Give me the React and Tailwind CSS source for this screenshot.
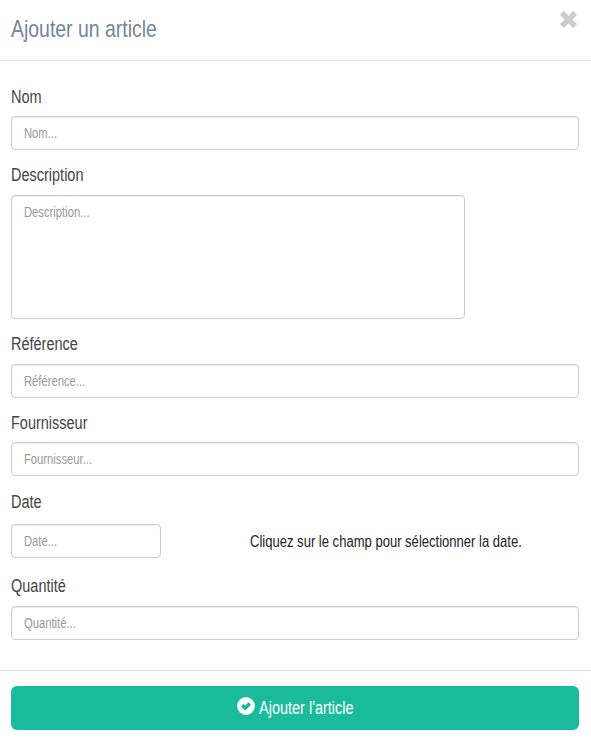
const font = "font-['Liberation_Sans_Narrow','Arial_Narrow','Liberation_Sans',sans-serif]";

const box =
  'block overflow-hidden border border-[#ccc] rounded bg-white px-3 py-1.5 shadow-[inset_0_1px_1px_rgba(0,0,0,0.075)]';

// Condensed text: the control is laid out wider, then squeezed to its box.
const control =
  'block w-[124%] origin-left scale-x-[0.803] bg-transparent p-0 text-sm leading-5 text-[#555] placeholder:text-[#999] placeholder:opacity-100 outline-none resize-none';

function Label({ children, className = '' }) {
  return (
    <label className={`block h-5 text-lg leading-5 text-[#444] ${className}`}>
      <span className="inline-block origin-left scale-x-[0.805]">{children}</span>
    </label>
  );
}

function Field({ placeholder, className = '' }) {
  return (
    <div className={`${box} h-[34px] ${className}`}>
      <input className={`${control} h-5`} placeholder={placeholder} />
    </div>
  );
}

function RemoveIcon() {
  return (
    <svg width="17" height="17" viewBox="0.2 0.2 17.6 17.6" fill="#cccccc">
      <path d="M4.5.5 9 5 13.5.5q.4-.4.8 0l3.2 3.2q.4.4 0 .8L13 9l4.5 4.5q.4.4 0 .8l-3.2 3.2q-.4.4-.8 0L9 13l-4.5 4.5q-.4.4-.8 0L.5 14.3q-.4-.4 0-.8L5 9 .5 4.5q-.4-.4 0-.8L3.7.5q.4-.4.8 0Z" />
    </svg>
  );
}

function OkSignIcon() {
  return (
    <svg className="mb-1 shrink-0" width="18" height="18" viewBox="0 0 18 18">
      <circle cx="9" cy="9" r="8.9" fill="#fff" />
      <path
        d="M4.3 9.1 6.2 7.2q.3-.3.6 0L8.2 8.4 11.3 5.5q.3-.3.6 0L13.8 7.4q.3.3 0 .6L8.6 13.2q-.4.4-.8 0L4.3 9.7q-.3-.3 0-.6Z"
        fill="#1abb9c"
      />
    </svg>
  );
}

export default function App() {
  return (
    <div className={`flex h-[741px] w-[591px] flex-col overflow-hidden bg-white ${font}`}>
      <header className="flex h-[61px] items-start justify-between border-b border-[#e5e5e5] pr-[14px] pl-[11px]">
        <h4 className="mt-4 origin-left scale-x-[0.81] text-2xl leading-[26px] text-[#73879c]">
          Ajouter un article
        </h4>
        <button aria-label="Fermer" className="mt-[11px]">
          <RemoveIcon />
        </button>
      </header>

      <form className="flex h-[609px] flex-col pr-3 pl-[11px]">
        <Label className="mt-[26px]">Nom</Label>
        <Field className="mt-[9px]" placeholder="Nom..." />

        <Label className="mt-[15px]">Description</Label>
        <div className={`${box} mt-[10px] h-[124px] w-[454px]`}>
          <textarea className={`${control} h-[110px]`} placeholder="Description..." />
        </div>

        <Label className="mt-[15px]">Référence</Label>
        <Field className="mt-[10px]" placeholder="Référence..." />

        <Label className="mt-[15px]">Fournisseur</Label>
        <Field className="mt-[9px]" placeholder="Fournisseur..." />

        <Label className="mt-4">Date</Label>
        <div className="mt-3 flex h-[34px] items-center">
          <Field className="w-[150px] shrink-0" placeholder="Date..." />
          <span className="ml-[89px] w-[272px] pt-0.5 text-base leading-5 whitespace-nowrap text-[#222]">
            <span className="inline-block origin-left scale-x-[0.815]">
              Cliquez sur le champ pour sélectionner la date.
            </span>
          </span>
        </div>

        <Label className="mt-[18px]">Quantité</Label>
        <Field className="mt-[10px]" placeholder="Quantité..." />
      </form>

      <footer className="h-[71px] border-t border-[#e5e5e5] pt-[15px] pr-3 pl-[11px]">
        <button className="flex h-11 w-full items-center justify-center gap-1 rounded-md bg-[#1abb9c] text-lg leading-6 text-white">
          <OkSignIcon />
          <span className="w-[94px] text-left whitespace-nowrap">
            <span className="inline-block origin-left scale-x-[0.805]">Ajouter l'article</span>
          </span>
        </button>
      </footer>
    </div>
  );
}
